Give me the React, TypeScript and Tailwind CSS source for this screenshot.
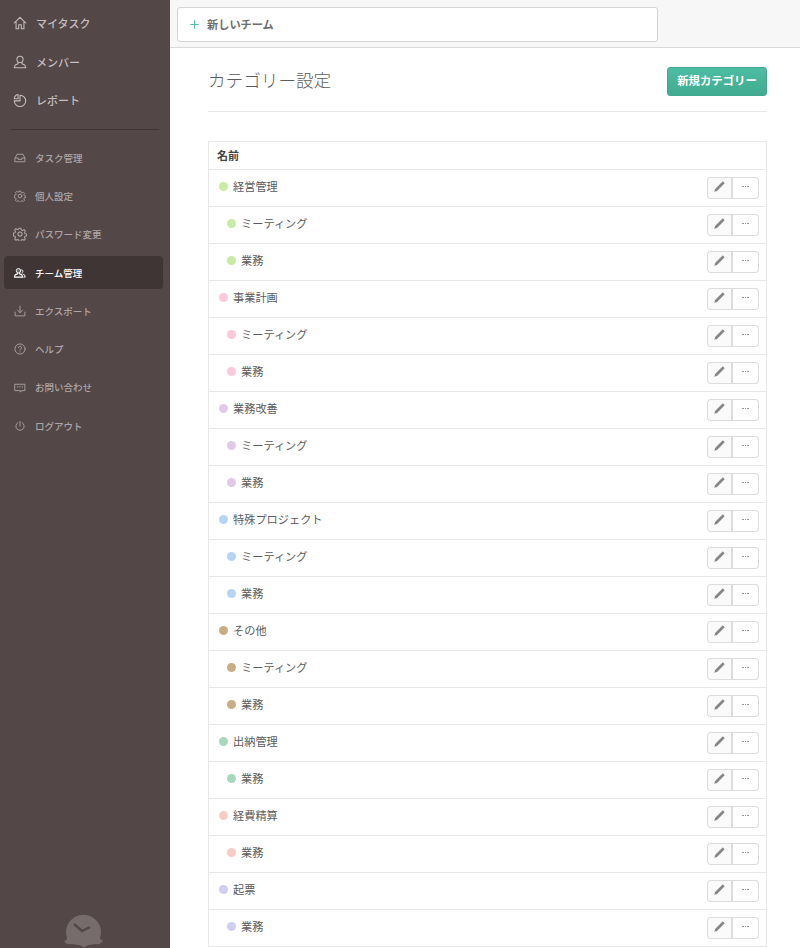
import { Plus } from "lucide-react";
import type { ReactNode } from "react";

const font = { fontFamily: '"Noto Sans CJK JP", "Noto Sans", sans-serif' };

function Glyph({ size, children }: { size: number; children: ReactNode }) {
  return (
    <svg
      width={size}
      height={size}
      viewBox="0 0 16 16"
      fill="none"
      stroke="currentColor"
      strokeWidth="1.2"
      strokeLinejoin="round"
      strokeLinecap="round"
      className="shrink-0"
    >
      {children}
    </svg>
  );
}

const gear = (
  <>
    <circle cx="8" cy="8" r="2.4" />
    <path d="M6.900 1.500h2.200l.4 1.900 1.400.6 1.700-1 1.500 1.500-1 1.700.6 1.400 1.800.4v2.200l-1.800.4-.6 1.400 1 1.700-1.500 1.500-1.700-1-1.400.6-.4 1.700H6.900l-.4-1.700-1.400-.6-1.700 1-1.500-1.500 1-1.700-.6-1.400-1.800-.4V6.900l1.800-.4.6-1.400-1-1.700 1.500-1.500 1.700 1 1.400-.6z" />
  </>
);

const topNav: { label: string; icon: ReactNode }[] = [
  {
    label: "マイタスク",
    icon: <path d="M1.500 7.800 8 1.500l6.500 6.300M3.500 6.500v8h3v-4.500h3v4.500h3v-8" />,
  },
  {
    label: "メンバー",
    icon: (
      <>
        <circle cx="8" cy="5" r="3.500" />
        <path d="M5.800 8.300v1.700L2.500 11.500l-1 3h13l-1-3-3.300-1.500V8.300" />
      </>
    ),
  },
  {
    label: "レポート",
    icon: (
      <>
        <path d="M8 2.500A6.500 6.500 0 1 1 1.500 9H8z" />
        <path d="M1.500 6.500A5 5 0 0 1 5.800 1.800v4.700z" />
      </>
    ),
  },
];

const subNav: { label: string; icon: ReactNode; size?: number; active?: boolean }[] = [
  {
    label: "タスク管理",
    icon: (
      <>
        <path d="M1.500 8 4 3h8l2.500 5v5h-13z" />
        <path d="M1.500 8h4v1.800h5V8h4" />
      </>
    ),
  },
  { label: "個人設定", icon: gear, size: 12 },
  { label: "パスワード変更", icon: gear, size: 14 },
  {
    label: "チーム管理",
    active: true,
    icon: (
      <>
        <circle cx="6" cy="5" r="3" fill="currentColor" fillOpacity="0.25" />
        <path d="M4.500 8v1.200L1.500 10.500l-1 3h11l-1-3-3-1.300V8" strokeWidth="1.500" />
        <path d="M10.500 3.500a2.500 2.500 0 0 1 0 4.500M12 9.500l2 1 1 3h-2" />
      </>
    ),
  },
  {
    label: "エクスポート",
    icon: <path d="M8 1.500v8.500M4.800 7 8 10.200 11.200 7M1.500 9.500v5h13v-5" />,
  },
  {
    label: "ヘルプ",
    icon: (
      <>
        <circle cx="8" cy="8" r="6.800" />
        <path d="M6 6.200a2 2 0 1 1 3 1.800c-.7.4-1 .8-1 1.600M8 11.800v.1" />
      </>
    ),
  },
  {
    label: "お問い合わせ",
    icon: (
      <>
        <path d="M1.500 3h13v8.500H10L8.500 13.500v-2H1.500z" />
        <path d="M4.500 6.500h.8M7.600 6.500h.8M10.700 6.500h.8" />
      </>
    ),
  },
  {
    label: "ログアウト",
    icon: <path d="M8 2v6M5 3.500a5.500 5.500 0 1 0 6 0" />,
  },
];

const rows: { name: string; child?: boolean; color: string }[] = [
  { name: "経営管理", color: "bg-[#c9eba4]" },
  { name: "ミーティング", child: true, color: "bg-[#c9eba4]" },
  { name: "業務", child: true, color: "bg-[#c9eba4]" },
  { name: "事業計画", color: "bg-[#fbc8dc]" },
  { name: "ミーティング", child: true, color: "bg-[#fbc8dc]" },
  { name: "業務", child: true, color: "bg-[#fbc8dc]" },
  { name: "業務改善", color: "bg-[#e2c9ea]" },
  { name: "ミーティング", child: true, color: "bg-[#e2c9ea]" },
  { name: "業務", child: true, color: "bg-[#e2c9ea]" },
  { name: "特殊プロジェクト", color: "bg-[#b8d4f3]" },
  { name: "ミーティング", child: true, color: "bg-[#b8d4f3]" },
  { name: "業務", child: true, color: "bg-[#b8d4f3]" },
  { name: "その他", color: "bg-[#c9ae85]" },
  { name: "ミーティング", child: true, color: "bg-[#c9ae85]" },
  { name: "業務", child: true, color: "bg-[#c9ae85]" },
  { name: "出納管理", color: "bg-[#a8d8bb]" },
  { name: "業務", child: true, color: "bg-[#a8d8bb]" },
  { name: "経費精算", color: "bg-[#f8cdc6]" },
  { name: "業務", child: true, color: "bg-[#f8cdc6]" },
  { name: "起票", color: "bg-[#d0cef0]" },
  { name: "業務", child: true, color: "bg-[#d0cef0]" },
];

function Sidebar() {
  return (
    <aside className="relative flex h-[948px] w-[170px] shrink-0 flex-col overflow-hidden bg-[#544747] pt-[4px]">
      <div className="flex flex-col">
        {topNav.map(({ label, icon }) => (
          <div key={label} className="flex h-[38.5px] items-center gap-[9px] pl-[13px] text-[#c4bdbd]">
            <Glyph size={14}>{icon}</Glyph>
            <span className="text-[11px] font-medium">{label}</span>
          </div>
        ))}
      </div>
      <div className="mx-[11px] mt-[9px] mb-[9.200px] border-t border-[#3f3535]" />
      <div className="flex flex-col">
        {subNav.map(({ label, icon, size, active }) => (
          <div
            key={label}
            className={`my-[2.65px] mr-[7px] ml-[4px] flex h-[33px] items-center rounded-[4px] ${
              active ? "bg-[#403535] text-white" : "text-[#aea6a6]"
            }`}
          >
            <span className="flex w-[31px] justify-center">
              <Glyph size={size ?? 12}>{icon}</Glyph>
            </span>
            <span className="text-[9.500px] font-medium">{label}</span>
          </div>
        ))}
      </div>
      <svg className="absolute top-[913px] left-[64px]" width="40" height="35" viewBox="0 0 40 35">
        <path
          d="M0 28c2 0 3-1 3-3A17.500 17.500 0 1 1 36 25c0 1 1 2 3 2-1 3-4 5-7 4-3 0-5 1-7 1-2 0-3 2-5 2s-3-2-5-2c-3 0-5-1-8-1-3 1-6-1-7-3z"
          fill="#766c6c"
        />
        <path d="M10 11l8 7 8-4" stroke="#544747" strokeWidth="2.400" fill="none" />
      </svg>
    </aside>
  );
}

function Row({ name, child, color }: { name: string; child?: boolean; color: string }) {
  return (
    <div className={`flex h-[37px] items-center justify-between border-t border-[#e8e8e8] pr-[7px] ${child ? "pl-[18px]" : "pl-[10px]"}`}>
      <div className="flex items-center gap-[5px]">
        <span className={`mb-[2px] size-[9px] rounded-full ${color}`} />
        <span className="pb-[3px] text-[11.200px] text-[#5c5c5c]">{name}</span>
      </div>
      <div className="mb-[1px] flex">
        <button className="flex h-[22px] w-[26px] items-center justify-center rounded-l-[4px] border border-r-2 border-[#dcdcdc] bg-[#fafafa]">
          <svg width="11" height="11" viewBox="0 0 11 11" className="mb-[2px]">
            <path d="M8.800 0.300 10.700 2.200 3 9.900 0.300 10.700 1.100 8z" fill="#868686" />
          </svg>
        </button>
        <button className="flex h-[22px] w-[26px] items-center justify-center rounded-r-[4px] border border-l-0 border-[#dcdcdc] bg-white">
          <span className="mb-[2px] flex gap-[1px]">
            <span className="size-[1.500px] bg-[#999]" />
            <span className="size-[1.500px] bg-[#999]" />
            <span className="size-[1.500px] bg-[#999]" />
          </span>
        </button>
      </div>
    </div>
  );
}

export default function App() {
  return (
    <div className="flex h-[948px] w-[800px] overflow-hidden bg-white" style={font}>
      <Sidebar />
      <div className="min-w-0 flex-1">
        <div className="flex h-[48px] items-start border-b border-[#d9d9d9] bg-[#f7f7f7] pt-[7px] pl-[7px]">
          <div className="flex h-[35px] w-[481px] items-center gap-[6px] rounded-[3px] border border-[#d4d4d4] bg-white pl-[10px]">
            <Plus className="size-[13px] text-[#4cbfa5]" strokeWidth={2} />
            <span className="text-[11.200px] font-bold text-[#6e6e6e]">新しいチーム</span>
          </div>
        </div>
        <main className="pr-[33px] pl-[38px]">
          <div className="flex items-start justify-between border-b border-[#e8e8e8] pt-[19px] pb-[15px]">
            <h1 className="pb-[2px] text-[17.600px] leading-[25px] font-light text-[#5c5c5c]">カテゴリー設定</h1>
            <button className="flex h-[29px] w-[100px] items-center justify-center rounded-[3px] border border-[#3fa98f] bg-gradient-to-b from-[#4dbda3] to-[#41ab91] pb-[1px] text-[11.400px] font-bold text-white">
              新規カテゴリー
            </button>
          </div>
          <div className="mt-[29px] border-x border-t border-[#e8e8e8]">
            <div className="flex h-[27px] items-center pl-[8px] text-[11px] font-bold text-[#444]">名前</div>
            {rows.map((r, i) => (
              <Row key={i} {...r} />
            ))}
            <div className="border-t border-[#e8e8e8]" />
          </div>
        </main>
      </div>
    </div>
  );
}
